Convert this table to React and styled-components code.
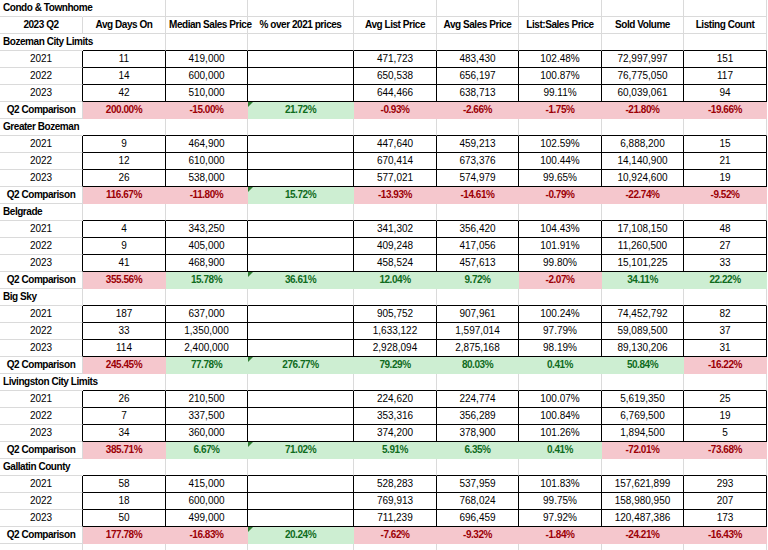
import React from 'react';
import styled, { createGlobalStyle } from 'styled-components';

const COLS = [83, 83, 82, 106, 83, 82, 83, 82, 83];
const GRID = '#dadada';
const INK = '#000';

const TONES = {
  bad: { fill: '#f5c7cd', text: '#9c0006' },
  good: { fill: '#cdeed2', text: '#0f6b1d' },
};

const HEADERS = [
  '2023 Q2',
  'Avg Days On',
  'Median Sales Price',
  '% over 2021 prices',
  'Avg List Price',
  'Avg Sales Price',
  'List:Sales Price',
  'Sold Volume',
  'Listing Count',
];

const AREAS = [
  {
    name: 'Bozeman City Limits',
    long: true,
    years: [
      ['2021', '11', '419,000', '', '471,723', '483,430', '102.48%', '72,997,997', '151'],
      ['2022', '14', '600,000', '', '650,538', '656,197', '100.87%', '76,775,050', '117'],
      ['2023', '42', '510,000', '', '644,466', '638,713', '99.11%', '60,039,061', '94'],
    ],
    compare: [
      ['200.00%', 'bad'], ['-15.00%', 'bad'], ['21.72%', 'good'], ['-0.93%', 'bad'],
      ['-2.66%', 'bad'], ['-1.75%', 'bad'], ['-21.80%', 'bad'], ['-19.66%', 'bad'],
    ],
  },
  {
    name: 'Greater Bozeman',
    long: true,
    years: [
      ['2021', '9', '464,900', '', '447,640', '459,213', '102.59%', '6,888,200', '15'],
      ['2022', '12', '610,000', '', '670,414', '673,376', '100.44%', '14,140,900', '21'],
      ['2023', '26', '538,000', '', '577,021', '574,979', '99.65%', '10,924,600', '19'],
    ],
    compare: [
      ['116.67%', 'bad'], ['-11.80%', 'bad'], ['15.72%', 'good'], ['-13.93%', 'bad'],
      ['-14.61%', 'bad'], ['-0.79%', 'bad'], ['-22.74%', 'bad'], ['-9.52%', 'bad'],
    ],
  },
  {
    name: 'Belgrade',
    years: [
      ['2021', '4', '343,250', '', '341,302', '356,420', '104.43%', '17,108,150', '48'],
      ['2022', '9', '405,000', '', '409,248', '417,056', '101.91%', '11,260,500', '27'],
      ['2023', '41', '468,900', '', '458,524', '457,613', '99.80%', '15,101,225', '33'],
    ],
    compare: [
      ['355.56%', 'bad'], ['15.78%', 'good'], ['36.61%', 'good'], ['12.04%', 'good'],
      ['9.72%', 'good'], ['-2.07%', 'bad'], ['34.11%', 'good'], ['22.22%', 'good'],
    ],
  },
  {
    name: 'Big Sky',
    years: [
      ['2021', '187', '637,000', '', '905,752', '907,961', '100.24%', '74,452,792', '82'],
      ['2022', '33', '1,350,000', '', '1,633,122', '1,597,014', '97.79%', '59,089,500', '37'],
      ['2023', '114', '2,400,000', '', '2,928,094', '2,875,168', '98.19%', '89,130,206', '31'],
    ],
    compare: [
      ['245.45%', 'bad'], ['77.78%', 'good'], ['276.77%', 'good'], ['79.29%', 'good'],
      ['80.03%', 'good'], ['0.41%', 'good'], ['50.84%', 'good'], ['-16.22%', 'bad'],
    ],
  },
  {
    name: 'Livingston City Limits',
    long: true,
    years: [
      ['2021', '26', '210,500', '', '224,620', '224,774', '100.07%', '5,619,350', '25'],
      ['2022', '7', '337,500', '', '353,316', '356,289', '100.84%', '6,769,500', '19'],
      ['2023', '34', '360,000', '', '374,200', '378,900', '101.26%', '1,894,500', '5'],
    ],
    compare: [
      ['385.71%', 'bad'], ['6.67%', 'good'], ['71.02%', 'good'], ['5.91%', 'good'],
      ['6.35%', 'good'], ['0.41%', 'good'], ['-72.01%', 'bad'], ['-73.68%', 'bad'],
    ],
  },
  {
    name: 'Gallatin County',
    long: true,
    years: [
      ['2021', '58', '415,000', '', '528,283', '537,959', '101.83%', '157,621,899', '293'],
      ['2022', '18', '600,000', '', '769,913', '768,024', '99.75%', '158,980,950', '207'],
      ['2023', '50', '499,000', '', '711,239', '696,459', '97.92%', '120,487,386', '173'],
    ],
    compare: [
      ['177.78%', 'bad'], ['-16.83%', 'bad'], ['20.24%', 'good'], ['-7.62%', 'bad'],
      ['-9.32%', 'bad'], ['-1.84%', 'bad'], ['-24.21%', 'bad'], ['-16.43%', 'bad'],
    ],
  },
];

const GlobalStyle = createGlobalStyle`
  html, body {
    margin: 0;
    padding: 0;
    background: #fff;
    overflow: hidden;
  }
  body {
    font-family: "Liberation Sans", Arial, sans-serif;
    color: #000;
  }
`;

const Sheet = styled.div`
  display: grid;
  grid-template-columns: ${COLS.map((w) => `${w}px`).join(' ')};
  grid-auto-rows: 17px;
  width: 768px;
  height: 550px;
  overflow: hidden;
  font-size: 10px;
`;

const Cell = styled.div`
  box-sizing: border-box;
  position: relative;
  height: 17px;
  line-height: 16px;
  padding: 0 3px;
  white-space: nowrap;
  text-align: ${(p) => p.$align || 'center'};
  font-weight: ${(p) => (p.$bold ? 700 : 400)};
  letter-spacing: ${(p) => (p.$bold ? '-0.45px' : '0')};
  color: ${(p) => (p.$tone ? TONES[p.$tone].text : '#000')};
  background: ${(p) => (p.$tone ? TONES[p.$tone].fill : 'transparent')};
  border-right: 1px solid ${(p) => (p.$tone ? 'transparent' : p.$right || GRID)};
  border-bottom: 1px solid ${(p) => (p.$tone ? 'transparent' : p.$bottom || GRID)};
`;

// the little error marker Excel puts on the "% over" cell
const Flag = styled.span`
  position: absolute;
  top: 0;
  left: 0;
  width: 0;
  height: 0;
  border-top: 5px solid #2f7d32;
  border-right: 5px solid transparent;
`;

const blanks = (n, props = {}) =>
  Array.from({ length: n }, (_, i) => <Cell key={`b${i}`} {...props} />);

const AreaBlock = ({ area }) => (
  <>
    <Cell $bold $align="left" $right={area.long ? 'transparent' : GRID}>
      {area.name}
    </Cell>
    {blanks(8, { $bottom: INK })}

    {area.years.map((row) => (
      <React.Fragment key={row[0]}>
        {row.map((value, i) => (
          <Cell key={i} $right={INK} $bottom={i === 0 ? GRID : INK}>
            {value}
          </Cell>
        ))}
      </React.Fragment>
    ))}

    <Cell $bold>Q2 Comparison</Cell>
    {area.compare.map(([value, tone], i) => (
      <Cell key={i} $bold $tone={tone}>
        {i === 2 && <Flag />}
        {value}
      </Cell>
    ))}
  </>
);

const App = () => (
  <>
    <GlobalStyle />
    <Sheet>
      <Cell $bold $align="left" $right="transparent">
        Condo &amp; Townhome
      </Cell>
      {blanks(8)}

      {HEADERS.map((h) => (
        <Cell key={h} $bold>
          {h}
        </Cell>
      ))}

      {AREAS.map((area) => (
        <AreaBlock key={area.name} area={area} />
      ))}

      {blanks(9)}
    </Sheet>
  </>
);

export default App;
